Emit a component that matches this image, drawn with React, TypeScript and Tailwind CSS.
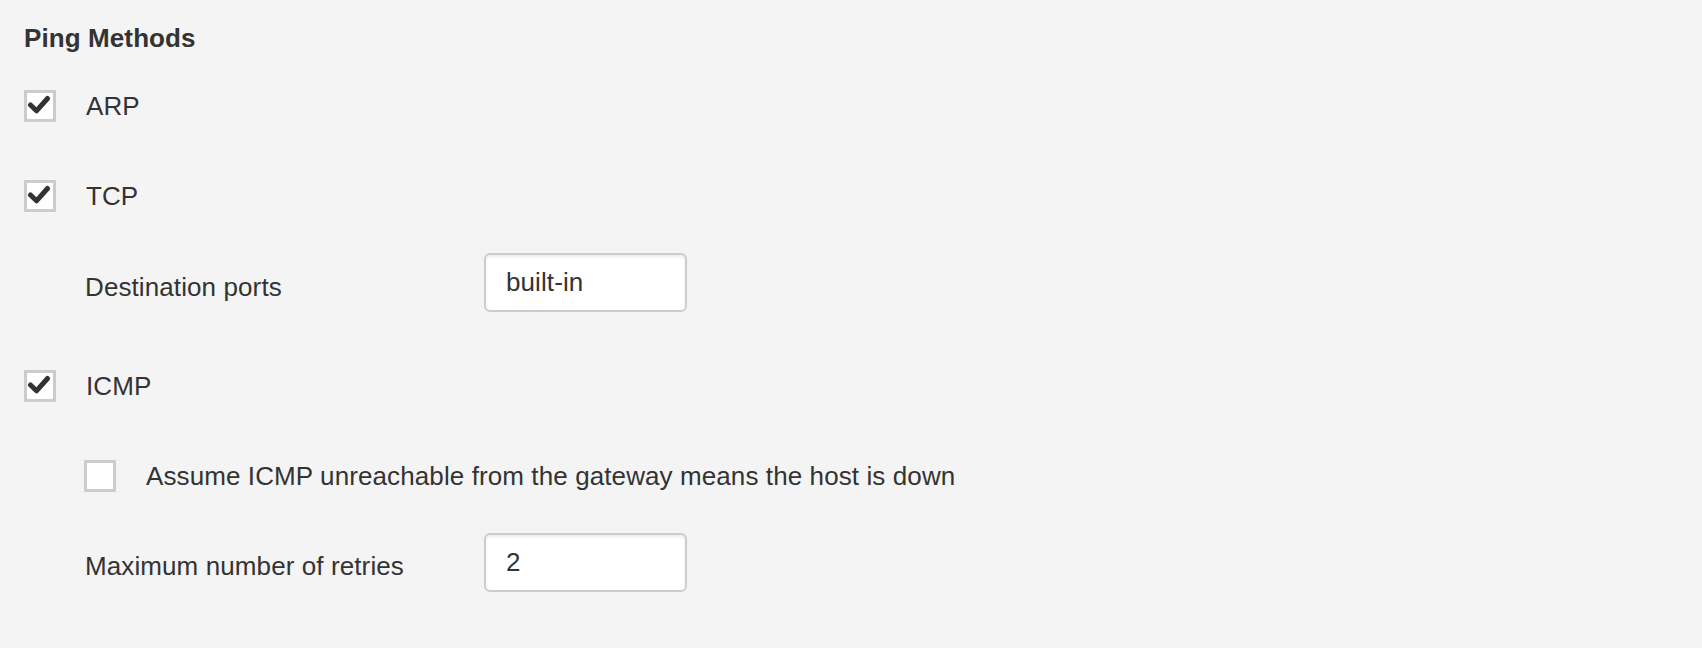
import { useState } from 'react'

const font = { fontFamily: '"Helvetica Neue", Helvetica, "Liberation Sans", Arial, sans-serif' }

function Box({ checked, onToggle }: { checked: boolean; onToggle: () => void }) {
  return (
    <button
      type="button"
      onClick={onToggle}
      className="w-8 h-8 shrink-0 bg-white border-[3px] border-[#cccccc] block p-0"
    >
      {checked && (
        <svg width="26" height="26" viewBox="0 0 26 26" className="block">
          <path d="M3.5 12 L9.5 17.8 L20.5 5.5" fill="none" stroke="#333333" strokeWidth="5" strokeLinecap="round" strokeLinejoin="round" />
        </svg>
      )}
    </button>
  )
}

function Field({ value, className = '' }: { value: string; className?: string }) {
  return (
    <input
      defaultValue={value}
      className={`w-[203px] h-[59px] bg-white border-2 border-[#cccccc] rounded-[6px] pl-[20px] text-[26px] text-[#333333] shadow-[inset_0_2px_3px_rgba(0,0,0,0.07)] outline-none ${className}`}
      style={font}
    />
  )
}

export default function App() {
  const [arp, setArp] = useState(true)
  const [tcp, setTcp] = useState(true)
  const [icmp, setIcmp] = useState(true)
  const [unreach, setUnreach] = useState(false)

  return (
    <div className="w-[1702px] h-[648px] bg-[#f4f4f4] text-[#333333] px-6 pt-3 tracking-[0.1px]" style={font}>
      <div className="h-[49px] flex items-center pt-[2px]">
        <h3 className="text-[26px] font-bold leading-none">Ping Methods</h3>
      </div>

      <div className="h-[90px] flex items-center gap-[30px]">
        <Box checked={arp} onToggle={() => setArp(!arp)} />
        <span className="text-[26px]">ARP</span>
      </div>

      <div className="h-[90px] flex items-center gap-[30px]">
        <Box checked={tcp} onToggle={() => setTcp(!tcp)} />
        <span className="text-[26px]">TCP</span>
      </div>

      <div className="h-[90px] flex items-center pl-[61px]">
        <span className="w-[399px] text-[26px] pt-[2px]">Destination ports</span>
        <Field value="built-in" className="-mt-[8px]" />
      </div>

      <div className="h-[110px] flex items-center gap-[30px]">
        <Box checked={icmp} onToggle={() => setIcmp(!icmp)} />
        <span className="text-[26px]">ICMP</span>
      </div>

      <div className="h-[70px] flex items-center gap-[30px] pl-[60px]">
        <Box checked={unreach} onToggle={() => setUnreach(!unreach)} />
        <span className="text-[26px]">Assume ICMP unreachable from the gateway means the host is down</span>
      </div>

      <div className="h-[102px] flex items-center pl-[61px]">
        <span className="w-[399px] text-[26px] pt-[9px]">Maximum number of retries</span>
        <Field value="2" />
      </div>
    </div>
  )
}
